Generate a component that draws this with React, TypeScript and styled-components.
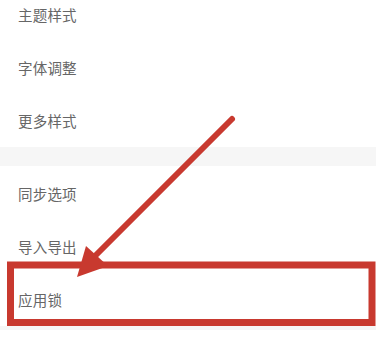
import React from "react";
import styled, { createGlobalStyle } from "styled-components";

const Global = createGlobalStyle`
  html, body { margin: 0; padding: 0; background: #ffffff; }
  body { font-family: "Noto Sans CJK SC", "Noto Sans", sans-serif; }
`;

const Page = styled.div`
  position: relative;
  width: 382px;
  height: 342px;
  overflow: hidden;
  background: #ffffff;
`;

const Content = styled.div`
  width: 376px;
  height: 100%;
  margin-top: -12.5px;
  background: #f6f6f6;
  display: flex;
  flex-direction: column;
`;

const Section = styled.div<{ $gapAfter: number }>`
  background: #ffffff;
  display: flex;
  flex-direction: column;
  margin-bottom: ${(p) => p.$gapAfter}px;
`;

const Row = styled.div`
  height: 53.3px;
  display: flex;
  align-items: center;
  padding-left: 18px;
  font-size: 14.5px;
  color: #666666;
  letter-spacing: 0.2px;
`;

const Overlay = styled.svg`
  position: absolute;
  left: 0;
  top: 0;
  width: 382px;
  height: 342px;
  pointer-events: none;
`;

const groups = [
  ["主题样式", "字体调整", "更多样式"],
  ["同步选项", "导入导出", "应用锁"],
];

export default function App() {
  return (
    <Page>
      <Global />
      <Content>
        {groups.map((g, i) => (
          <Section key={i} $gapAfter={i === 0 ? 19 : 0}>
            {g.map((t) => (
              <Row key={t}>{t}</Row>
            ))}
          </Section>
        ))}
      </Content>
      <Overlay viewBox="0 0 382 342">
        <rect x="10.5" y="265" width="361.5" height="57.5" fill="none" stroke="#c8392f" strokeWidth="7" />
        <line x1="232" y1="119" x2="92" y2="259" stroke="#c8392f" strokeWidth="6" strokeLinecap="round" />
        <polygon points="77,277 86,246 108,266" fill="#c8392f" />
      </Overlay>
    </Page>
  );
}
